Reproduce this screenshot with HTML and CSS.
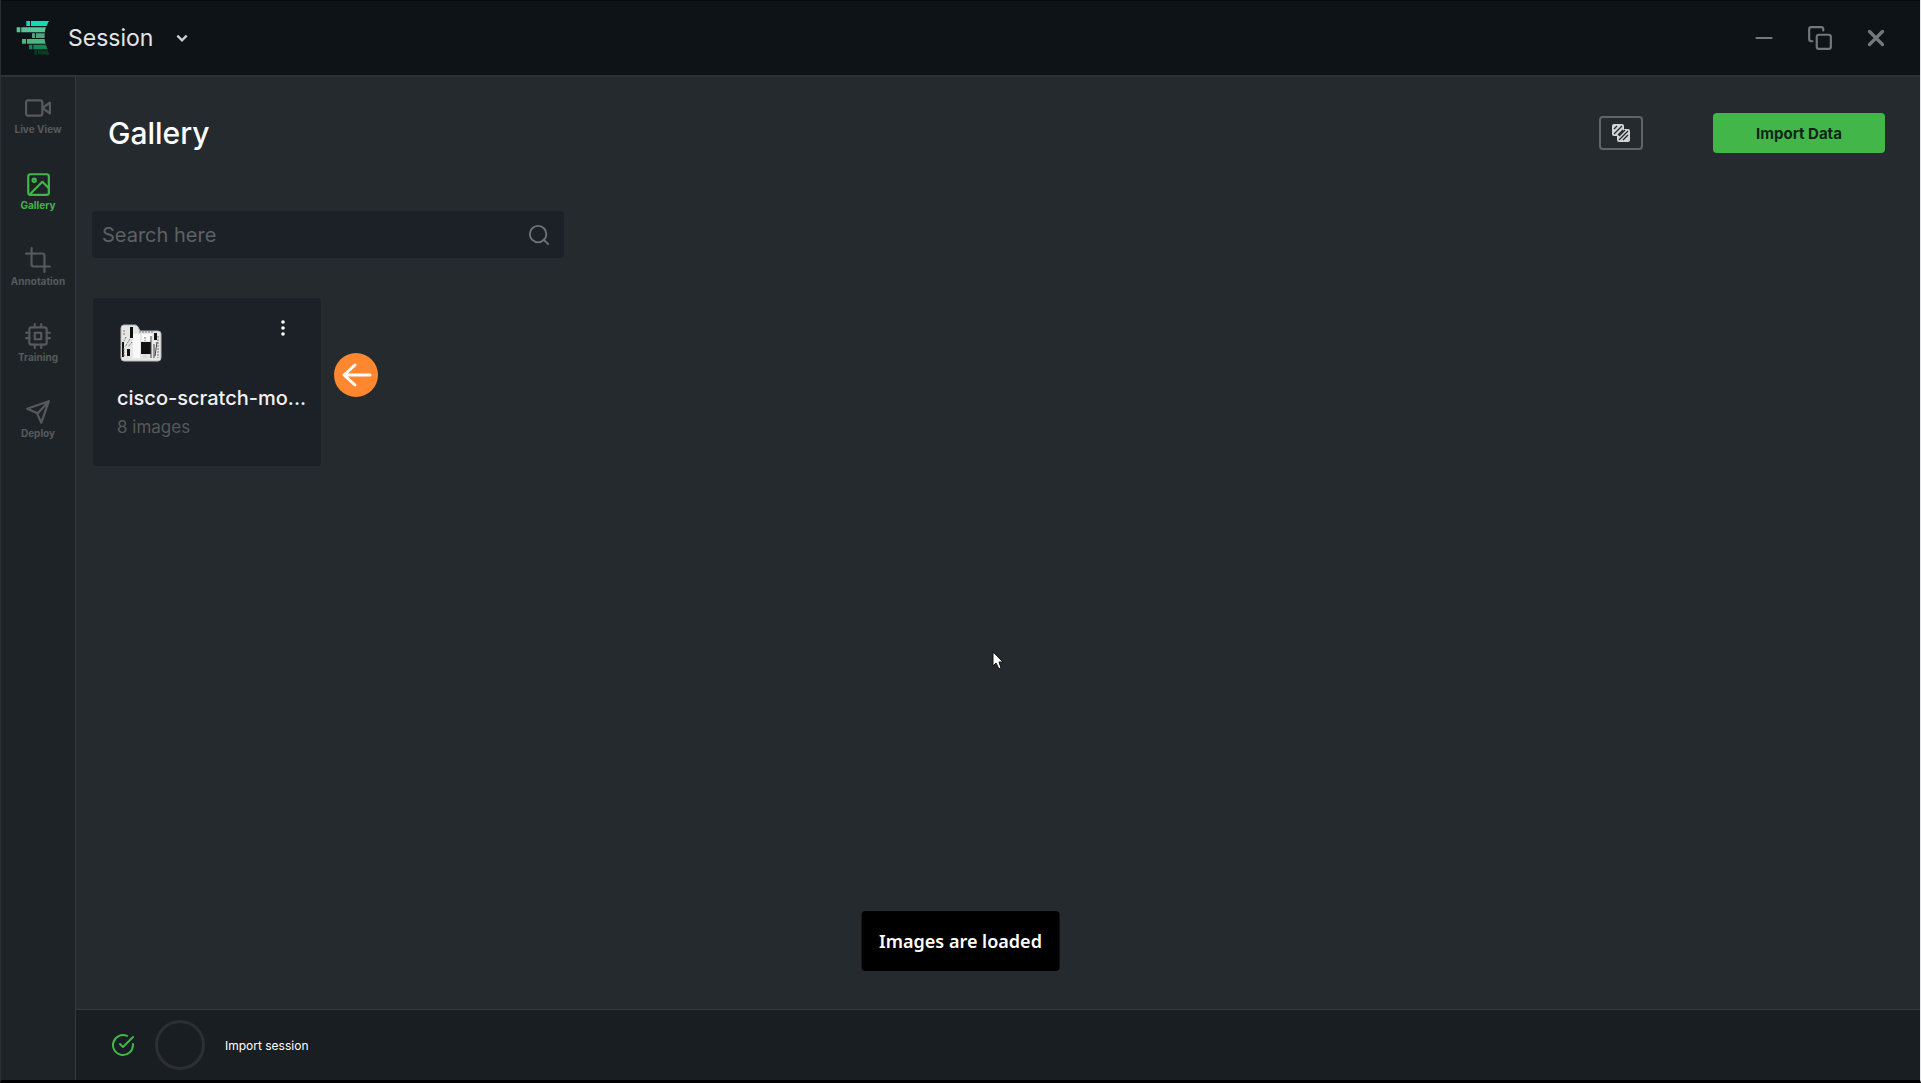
FILE: index.html
```html
<!DOCTYPE html>
<html lang="en">
<head>
  <meta charset="UTF-8">
  <meta name="viewport" content="width=device-width, initial-scale=1.0">
  <title>Session - Gallery</title>
  <link rel="stylesheet" href="styles.css">
</head>
<body>
  <div class="app">
    <header class="topbar">
      <svg class="logo" viewBox="48 60 102 108">
        <path fill="#0be0b4" d="M79 63h11v15H79zM93 63h54q-5 7-7 15H93z"/>
        <path fill="#55c596" d="M50 82h11v15H50zM64 82h74q-3 7-3 15H64z"/>
        <path fill="#4aa67c" d="M96 100h9v14h-9zM108 100h26v14h-26z"/>
        <path fill="#48b583" d="M66 117h12v14H66zM81 117h53q0 8 3 14H81z"/>
        <path fill="#168453" d="M87 134h10v14H87zM100 134h38q2 8 5 14h-43z"/>
        <path fill="#073d25" d="M103 151h8v13h-8zM114 151h30q1 7 4 14l-34-2z"/>
      </svg>
      <button class="session-btn">
        Session
        <svg class="chevron" viewBox="0 0 12 12"><path d="M2 4l4 4 4-4"/></svg>
      </button>
      <div class="window-controls">
        <button aria-label="Minimize"><svg class="icon" viewBox="0 0 24 24"><path d="M5 12h14"/></svg></button>
        <button aria-label="Restore"><svg class="icon" viewBox="0 0 24 24"><rect x="9" y="9" width="13" height="13" rx="2"/><path d="M5 15H4a2 2 0 0 1-2-2V4a2 2 0 0 1 2-2h9a2 2 0 0 1 2 2v1"/></svg></button>
        <button aria-label="Close"><svg class="icon close" viewBox="0 0 24 24"><path d="M18 6L6 18M6 6l12 12"/></svg></button>
      </div>
    </header>

    <div class="layout">
      <nav class="sidebar">
        <a href="#live">
          <svg class="icon" viewBox="0 0 24 24"><path d="M23 7l-7 5 7 5z"/><rect x="1" y="5" width="15" height="14" rx="2"/></svg>
          Live View
        </a>
        <a href="#gallery" class="active">
          <svg class="icon" viewBox="0 0 24 24"><rect x="3" y="3" width="19" height="19" rx="2"/><circle cx="8.500" cy="8.500" r="1.500"/><path d="M22 16l-6-6L5 21"/></svg>
          Gallery
        </a>
        <a href="#annotation">
          <svg class="icon" viewBox="0 0 24 24"><path d="M6.1 1L6 16a2 2 0 0 0 2 2h15"/><path d="M1 6.1L16 6a2 2 0 0 1 2 2v15"/></svg>
          Annotation
        </a>
        <a href="#training">
          <svg class="icon" viewBox="0 0 24 24"><rect x="4" y="4" width="16" height="16" rx="2"/><path d="M9 9h6v6H9zM9 1v3M15 1v3M9 20v3M15 20v3M20 9h3M20 14h3M1 9h3M1 14h3"/></svg>
          Training
        </a>
        <a href="#deploy">
          <svg class="icon" viewBox="0 0 24 24"><path d="M22 2L12 13M22 2l-7 20-4-9-9-4z"/></svg>
          Deploy
        </a>
      </nav>

      <div class="content">
        <main class="gallery">
          <div class="page-header">
            <h1>Gallery</h1>
            <button class="compare-btn" aria-label="Compare">
              <svg viewBox="0 0 20 20">
                <path class="sheet" d="M3 1h8q2 0 2 2v3h4q2 0 2 2v9q0 2-2 2H8q-2 0-2-2v-4H3q-2 0-2-2V3q0-2 2-2z"/>
                <path class="hatch" d="M3 6l3-3M3 11l8-8M7 12l5-5M8 17l9-9M8 13l6-6M12 17l5-5"/>
              </svg>
            </button>
            <button class="import-btn">Import Data</button>
          </div>

          <div class="search-bar">
            <input type="text" placeholder="Search here" aria-label="Search here">
            <svg class="icon" viewBox="0 0 24 24"><circle cx="11" cy="11" r="9"/><path d="M22 22l-5-5"/></svg>
          </div>

          <div class="cards">
            <article class="card">
              <div class="card-top">
                <svg class="folder" viewBox="0 0 42 38">
                  <path fill="#e6e6e6" stroke="#b5b5b5" d="M1 4q0-3 3-3h11q2 0 3 2l2 4h18q3 0 3 3v24q0 3-3 3H4q-3 0-3-3z"/>
                  <path fill="#f8f8f8" d="M13 10h7v24h-7zM22 10h10v7H22z"/>
                  <path fill="#111" d="M10 3h3v11h-3zM21 18h10v12H21zM7 25h3v7H7zM34 9h3v7h-3zM2 18h2v15H2z"/>
                  <path fill="none" stroke="#777" d="M4 6v5M6 13l-2 4M10 15l-5 8M12 18l-4 5M19 8h14M25 13v4M38 12v22M4 24v8" stroke-dasharray="2 1"/>
                  <path fill="none" stroke="#444" d="M31 12v22M34 20v14M37 18l-2 14"/>
                  <path fill="#ddd" d="M23 30h4v4h-4z"/>
                </svg>
                <button class="more-btn" aria-label="More">
                  <svg viewBox="0 0 4 16"><circle cx="2" cy="2" r="1.8"/><circle cx="2" cy="8" r="1.8"/><circle cx="2" cy="14" r="1.8"/></svg>
                </button>
              </div>
              <div class="card-title">cisco-scratch-mo...</div>
              <div class="card-subtitle">8 images</div>
            </article>
            <svg class="pointer-badge" viewBox="0 0 44 44">
              <circle cx="22" cy="22" r="22"/>
              <path d="M36 22H10M21 12L10 22l11 10"/>
            </svg>
          </div>
        </main>

        <footer class="statusbar">
          <svg class="icon done" viewBox="0 0 24 24"><path d="M22 11v1a10 10 0 1 1-6-9.100"/><path d="M22 4L12 14l-3-3"/></svg>
          <span class="ring"></span>
          <span>Import session</span>
        </footer>
      </div>
    </div>

    <div class="toast" role="status">Images are loaded</div>
    <svg class="cursor" viewBox="0 0 12 19"><path d="M1 1v14l3-3 3 6 2-1-2-6h4z"/></svg>
  </div>
</body>
</html>
```
FILE: styles.css
```css
* {
  box-sizing: border-box;
}
body {
  margin: 0;
  font-family: Inter, "Liberation Sans", sans-serif;
  background-color: #000;
  color: #fff;
}
button {
  padding: 0;
  border: none;
  background: none;
  color: inherit;
  font-family: inherit;
  cursor: pointer;
}
svg {
  display: block;
  flex-shrink: 0;
}
.icon {
  width: 26px;
  height: 26px;
  fill: none;
  stroke: currentColor;
  stroke-width: 2;
  stroke-linecap: round;
  stroke-linejoin: round;
}
.app {
  position: relative;
  display: flex;
  flex-direction: column;
  height: 100vh;
  border-left: 1px solid #2b3034;
  border-right: 1px solid #e4e6e8;
  border-bottom: 3px solid #000;
}
.topbar {
  display: flex;
  align-items: center;
  height: 77px;
  padding: 0 31px 0 15px;
  background-color: #0e1317;
  border-top: 1px solid #07090b;
  border-bottom: 2px solid #2e3337;
}
.logo {
  width: 34px;
  height: 36px;
}
.session-btn {
  display: flex;
  align-items: center;
  gap: 22px;
  margin-left: 18px;
  font-size: 23px;
  color: #e4e4e4;
}
.chevron {
  width: 14px;
  height: 14px;
  fill: none;
  stroke: #d0d0d0;
  stroke-width: 2;
}
.window-controls {
  display: flex;
  gap: 30px;
  margin-left: auto;
  color: #74787a;
}
.window-controls .close {
  stroke-width: 3;
}
.layout {
  display: flex;
  flex: 1;
  min-height: 0;
}
.sidebar {
  width: 75px;
  flex-shrink: 0;
  background-color: #1e2327;
  border-right: 1px solid #363b3f;
}
.sidebar a {
  display: flex;
  flex-direction: column;
  align-items: center;
  gap: 2px;
  height: 76px;
  padding-top: 18px;
  color: #565a5d;
  font-size: 10px;
  line-height: 12px;
  font-weight: 700;
  text-decoration: none;
}
.sidebar a.active {
  color: #43b649;
}
.content {
  display: flex;
  flex: 1;
  flex-direction: column;
  min-width: 0;
}
.gallery {
  flex: 1;
  padding: 36px 35px 0 16px;
  background-color: #252a2e;
}
.page-header {
  display: flex;
  align-items: center;
  height: 40px;
}
.page-header h1 {
  margin: 0 0 0 16px;
  font-size: 30px;
  line-height: 40px;
  font-weight: 500;
}
.compare-btn {
  display: flex;
  align-items: center;
  justify-content: center;
  width: 44px;
  height: 34px;
  margin-left: auto;
  border: 2px solid #606467;
  border-radius: 4px;
}
.compare-btn svg {
  width: 20px;
  height: 20px;
}
.compare-btn .sheet {
  fill: #d2d4d5;
}
.compare-btn .hatch {
  stroke: #25292d;
  stroke-width: 1.3;
}
.import-btn {
  width: 172px;
  height: 40px;
  margin-left: 70px;
  border-radius: 4px;
  background-color: #43b649;
  color: #10251a;
  font-size: 15px;
  font-weight: 700;
}
.search-bar {
  display: flex;
  align-items: center;
  width: 472px;
  height: 47px;
  margin-top: 58px;
  padding: 0 14px 0 10px;
  border-radius: 4px;
  background-color: #1c2127;
}
.search-bar input {
  flex: 1;
  min-width: 0;
  padding: 0;
  border: none;
  outline: none;
  background: none;
  color: #e4e4e4;
  font-family: inherit;
  font-size: 20px;
}
.search-bar input::placeholder {
  color: #5d6164;
}
.search-bar .icon {
  width: 22px;
  height: 22px;
  color: #6e7275;
}
.cards {
  display: flex;
  align-items: flex-start;
  gap: 13px;
  margin-top: 40px;
}
.card {
  width: 228px;
  height: 168px;
  padding: 20px 16px 0 24px;
  margin-left: 1px;
  border-radius: 4px;
  background-color: #1c2127;
}
.card-top {
  display: flex;
  justify-content: space-between;
  height: 66px;
  padding-top: 6px;
  padding-right: 20px;
  padding-left: 3px;
}
.folder {
  width: 42px;
  height: 38px;
}
.more-btn {
  align-self: flex-start;
  margin-top: -4px;
}
.more-btn svg {
  width: 4px;
  height: 16px;
  fill: #fff;
}
.card-title {
  font-size: 20px;
  line-height: 28px;
  font-weight: 500;
  white-space: nowrap;
  color: #f0f0f0;
}
.card-subtitle {
  font-size: 17px;
  line-height: 30px;
  color: #54585b;
}
.pointer-badge {
  width: 44px;
  height: 44px;
  margin-top: 55px;
  fill: #ff8730;
}
.pointer-badge path {
  fill: none;
  stroke: #fff;
  stroke-width: 3;
  stroke-linecap: round;
  stroke-linejoin: round;
}
.statusbar {
  display: flex;
  align-items: center;
  height: 71px;
  padding-left: 35px;
  border-top: 1px solid #363b3f;
  background-color: #191e22;
  font-size: 12px;
}
.done {
  width: 24px;
  height: 24px;
  color: #43b649;
}
.ring {
  width: 50px;
  height: 50px;
  margin: 0 20px;
  border: 3px solid #2d2f31;
  border-radius: 50%;
}
.toast {
  position: absolute;
  left: 50%;
  bottom: 109px;
  transform: translateX(-50%);
  padding: 18px;
  border-radius: 4px;
  background-color: #000;
  font-family: "Noto Sans", sans-serif;
  font-size: 18px;
  line-height: 24px;
  font-weight: 600;
  white-space: nowrap;
}
.cursor {
  position: absolute;
  top: 651px;
  left: 991px;
  width: 12px;
  height: 19px;
  fill: #fff;
  stroke: #111;
}
```
